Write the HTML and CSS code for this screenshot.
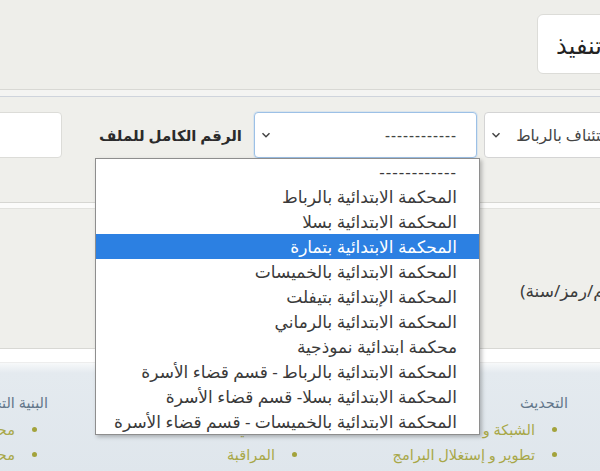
FILE: index.html
```html
<!DOCTYPE html>
<html lang="ar" dir="rtl">
<head>
<meta charset="utf-8">
<title>بحث</title>
<link rel="stylesheet" href="styles.css">
</head>
<body>
<div class="page">
  <div class="top">
    <button class="btn">تنفيذ</button>
  </div>
  <div class="divider"></div>
  <div class="form-area">
    <div class="form-row">
      <div class="select court">
        <span class="val">محكمة الاستئناف بالرباط</span>
        <svg class="chev" width="10" height="8" viewBox="0 0 10 8"><path d="M1.5 2.2 L5 5.7 L8.5 2.2" fill="none" stroke="#444" stroke-width="1.5"/></svg>
      </div>
      <div class="select tribunal">
        <span class="val dashes">------------</span>
        <svg class="chev" width="10" height="8" viewBox="0 0 10 8"><path d="M1.5 2.2 L5 5.7 L8.5 2.2" fill="none" stroke="#444" stroke-width="1.5"/></svg>
      </div>
      <label class="lbl">الرقم الكامل للملف</label>
      <div class="input"></div>
    </div>
  </div>
  <div class="sep"></div>
  <div class="mid">
    <span class="hint">(رقم/رمز/سنة)</span>
  </div>
  <div class="sep2"></div>
  <footer class="footer">
    <div class="col">
      <h4>التحديث</h4>
      <ul>
        <li>الشبكة و الاتصالات</li>
        <li>تطوير و إستغلال البرامج</li>
      </ul>
    </div>
    <div class="col">
      <h4>الأمن المعلوماتي</h4>
      <ul>
        <li>الحماية</li>
        <li>المراقبة</li>
      </ul>
    </div>
    <div class="col">
      <h4>البنية التحتية</h4>
      <ul>
        <li>محطات العمل</li>
        <li>محولات الشبكة</li>
      </ul>
    </div>
  </footer>

  <ul class="dropdown">
    <li class="dashes">------------</li>
    <li>المحكمة الابتدائية بالرباط</li>
    <li>المحكمة الابتدائية بسلا</li>
    <li class="active">المحكمة الابتدائية بتمارة</li>
    <li>المحكمة الابتدائية بالخميسات</li>
    <li>المحكمة الإبتدائية بتيفلت</li>
    <li>المحكمة الابتدائية بالرماني</li>
    <li>محكمة ابتدائية نموذجية</li>
    <li>المحكمة الابتدائية بالرباط - قسم قضاء الأسرة</li>
    <li>المحكمة الابتدائية بسلا- قسم قضاء الأسرة</li>
    <li>المحكمة الابتدائية بالخميسات - قسم قضاء الأسرة</li>
  </ul>
</div>
</body>
</html>
```

FILE: styles.css
```css
* { box-sizing: border-box; }
html, body {
  margin: 0;
  padding: 0;
}
body {
  width: 600px;
  height: 471px;
  overflow: hidden;
  background: #efefeb;
  font-family: "Noto Sans", "DejaVu Sans", sans-serif;
  color: #333;
}
.page {
  position: relative;
  width: 600px;
  height: 471px;
  overflow: hidden;
}
.top {
  height: 89px;
  padding-top: 14px;
  display: flex;
  background: #eeeeea;
}
.btn {
  height: 60px;
  margin-right: -17px;
  padding: 0 14px 0 18px;
  background: #fff;
  border: 1px solid #dcdcd8;
  border-radius: 6px;
  font-family: inherit;
  font-size: 24px;
  color: #222;
}
.divider {
  height: 8px;
  border-top: 1px solid #d8d8d4;
  border-bottom: 1px solid #cfd4dc;
  background: #f4f4f2;
}
.form-area {
  height: 105px;
  padding-top: 15px;
  background: #efefeb;
}
.form-row {
  display: flex;
  align-items: center;
  height: 46px;
}
.select {
  height: 46px;
  background: #fff;
  border: 1px solid #d4d4d4;
  border-radius: 4px;
  display: flex;
  align-items: center;
  font-size: 15.5px;
  color: #444;
}
.select .val { flex: 1; white-space: nowrap; }
.dashes { letter-spacing: 1px; }
.chev { flex: none; }
.court {
  width: 206px;
  margin-right: -90px;
  padding: 0 14px 0 6px;
}
.tribunal {
  width: 223px;
  margin-right: 7px;
  padding: 0 19px 0 6px;
  border-color: #9cc0e6;
  box-shadow: 0 0 0 1px rgba(160, 200, 240, 0.25);
}
.lbl {
  margin-right: 12px;
  font-weight: bold;
  font-size: 15px;
  color: #2b2b2b;
  white-space: nowrap;
}
.input {
  width: 100px;
  height: 46px;
  margin-right: auto;
  margin-left: -38px;
  background: #fff;
  border: 1px solid #dcdcd8;
  border-radius: 4px;
}
.sep {
  height: 7px;
  border-top: 1px solid #d6d6d2;
  border-bottom: 1px solid #e2e2de;
  background: #fbfbfa;
}
.mid {
  height: 139px;
  padding-top: 71px;
  background: #efefeb;
}
.hint {
  display: block;
  margin-right: -26px;
  font-size: 17px;
  line-height: 22px;
  color: #3c3c3c;
}
.sep2 {
  height: 15px;
  border-top: 1px solid #d8d8d4;
  border-bottom: 1px solid #ededed;
  background: #ffffff;
}
.footer {
  height: 109px;
  display: flex;
  padding: 29px 32px 0 0;
  background: linear-gradient(#f7f9fa 0, #e4eaef 10px, #dfe6ec 100%);
}
.col {
  width: 260px;
  flex: none;
}
.col h4 {
  margin: 0;
  font-weight: normal;
  font-size: 14.5px;
  line-height: 20px;
  color: #62768a;
}
.col ul {
  list-style: none;
  margin: 5px 0 0;
  padding: 0 33px 0 0;
}
.col li {
  position: relative;
  font-size: 14.5px;
  line-height: 25px;
  color: #a8a748;
  white-space: nowrap;
}
.col li::before {
  content: "";
  position: absolute;
  right: -22px;
  top: 10px;
  width: 5px;
  height: 5px;
  border-radius: 50%;
  background: #a3a33c;
}
.dropdown {
  position: absolute;
  left: 95px;
  top: 158px;
  width: 385px;
  margin: 0;
  padding: 0;
  list-style: none;
  background: #fff;
  border: 1px solid #8e8e8e;
  box-shadow: 2px 2px 4px rgba(0, 0, 0, 0.25);
}
.dropdown li {
  height: 25px;
  line-height: 25px;
  padding-right: 22px;
  font-size: 17px;
  color: #3a3a3a;
  white-space: nowrap;
}
.dropdown li.active {
  background: #2c80e2;
  color: #fff;
}
```
